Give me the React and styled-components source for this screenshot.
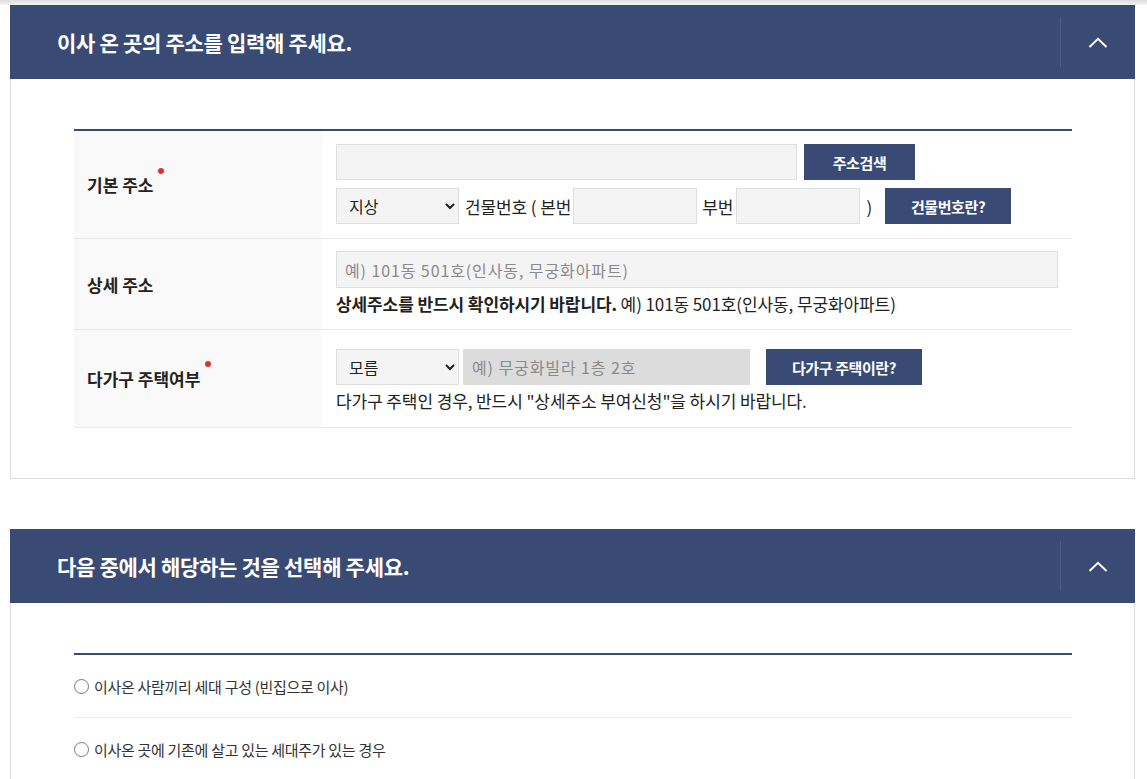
import styled, { createGlobalStyle } from "styled-components";

const NAVY = "#394b75";

const GlobalStyle = createGlobalStyle`
  html, body {
    margin: 0;
    padding: 0;
    background: #fff;
  }
  body {
    font-family: "Noto Sans CJK KR", "Noto Sans", sans-serif;
    color: #222;
  }
  * {
    box-sizing: border-box;
  }
`;

const Page = styled.div`
  width: 1147px;
  padding: 5px 12px 0 10px;
  position: relative;
`;

const TopShade = styled.div`
  position: absolute;
  top: 0;
  left: 0;
  right: 0;
  height: 5px;
  background: linear-gradient(#dcdcdc, #f4f4f4);
`;

const Section = styled.section`
  margin-bottom: 50px;
`;

const Header = styled.div`
  height: 74px;
  background: ${NAVY};
  display: flex;
  align-items: center;
`;

const Title = styled.h2`
  flex: 1;
  margin: 0;
  padding-left: 47px;
  color: #fff;
  font-size: 21px;
  font-weight: 700;
  letter-spacing: -0.3px;
`;

const Toggle = styled.div`
  width: 75px;
  height: 50px;
  border-left: 1px solid #4c5e88;
  display: flex;
  align-items: center;
  justify-content: center;
`;

const Body = styled.div`
  border: 1px solid #dcdcdc;
  border-top: 0;
  padding: 50px 62px 50px 63px;
`;

const Table = styled.div`
  border-top: 2px solid ${NAVY};
`;

const Row = styled.div`
  display: flex;
  border-bottom: 1px solid #e9e9e9;
`;

const LabelCell = styled.div`
  width: 248px;
  background: #f9f9f9;
  padding-left: 13px;
  display: flex;
  align-items: center;
`;

const Label = styled.span`
  position: relative;
  font-size: 17px;
  font-weight: 700;
  letter-spacing: 0;
  color: #222;
`;

const Required = styled.i`
  position: absolute;
  right: -11px;
  top: ${(p) => (p.$top ? p.$top : 0)}px;
  width: 6px;
  height: 6px;
  border-radius: 50%;
  background: #e4322b;
`;

const ContentCell = styled.div`
  flex: 1;
  padding: ${(p) => p.$pad} 14px;
  display: flex;
  flex-direction: column;
  gap: ${(p) => p.$gap || 3}px;
`;

const Line = styled.div`
  display: flex;
  align-items: center;
  height: ${(p) => p.$h || 36}px;
  font-size: 17px;
  letter-spacing: -0.1px;
  color: #222;
  white-space: pre;
`;

const Input = styled.input`
  width: ${(p) => p.$w}px;
  height: ${(p) => p.$h || 36}px;
  margin-right: ${(p) => p.$mr || 0}px;
  border: 1px solid ${(p) => (p.$disabled ? "#dcdcdc" : "#dedede")};
  background: ${(p) => (p.$disabled ? "#dcdcdc" : "#f4f4f4")};
  padding: 0 8px;
  font-family: "Noto Sans CJK KR", sans-serif;
  font-size: 16px;
  letter-spacing: 0.9px;
  color: #333;
  outline: none;
  &::placeholder {
    color: #8a8a8a;
  }
`;

const Select = styled.select`
  width: 123px;
  height: 36px;
  margin-right: ${(p) => p.$mr || 0}px;
  border: 1px solid #dedede;
  background: #f4f4f4;
  padding: 0 8px;
  font-family: "Noto Sans CJK KR", sans-serif;
  font-size: 16px;
  color: #222;
`;

const Button = styled.button`
  width: ${(p) => p.$w}px;
  height: 36px;
  margin-left: ${(p) => p.$ml || 0}px;
  border: 0;
  background: ${NAVY};
  color: #fff;
  font-family: "Noto Sans CJK KR", sans-serif;
  font-size: 15px;
  font-weight: 700;
  letter-spacing: -0.4px;
  cursor: pointer;
`;

const Text = styled.span`
  margin-right: ${(p) => p.$mr || 0}px;
  margin-left: ${(p) => p.$ml || 0}px;
`;

const Strong = styled.b`
  font-weight: 700;
`;

const Option = styled.label`
  display: flex;
  align-items: center;
  height: 63px;
  border-bottom: 1px solid #e9e9e9;
  font-size: 15px;
  letter-spacing: -0.3px;
  color: #333;
`;

const Circle = styled.span`
  width: 15px;
  height: 15px;
  border: 1px solid #777;
  border-radius: 50%;
  margin-right: 5px;
`;

function Chevron() {
  return (
    <svg width="20" height="11" viewBox="0 0 20 11">
      <polyline
        points="1.5,10 10,1.8 18.5,10"
        fill="none"
        stroke="#fff"
        strokeWidth="2"
      />
    </svg>
  );
}

function SectionHeader({ title }) {
  return (
    <Header>
      <Title>{title}</Title>
      <Toggle>
        <Chevron />
      </Toggle>
    </Header>
  );
}

export default function App() {
  return (
    <Page>
      <GlobalStyle />
      <TopShade />
      <Section>
        <SectionHeader title="이사 온 곳의 주소를 입력해 주세요." />
        <Body>
          <Table>
            <Row>
              <LabelCell>
                <Label>
                  기본 주소
                  <Required $top={-4} />
                </Label>
              </LabelCell>
              <ContentCell $pad="13px 14px 14px" $gap={8}>
                <Line>
                  <Input $w={461} />
                  <Button $w={111} $ml={7}>
                    주소검색
                  </Button>
                </Line>
                <Line>
                  <Select $mr={6}>
                    <option>지상</option>
                    <option>지하</option>
                  </Select>
                  <Text $mr={2}>건물번호 ( 본번</Text>
                  <Input $w={124} $mr={5} />
                  <Text $mr={3}>부번</Text>
                  <Input $w={124} />
                  <Text $ml={6}>)</Text>
                  <Button $w={126} $ml={13}>
                    건물번호란?
                  </Button>
                </Line>
              </ContentCell>
            </Row>
            <Row>
              <LabelCell>
                <Label>상세 주소</Label>
              </LabelCell>
              <ContentCell $pad="12px 14px 14px">
                <Line $h={37}>
                  <Input
                    $w={722}
                    $h={37}
                    placeholder="예) 101동 501호(인사동, 무궁화아파트)"
                  />
                </Line>
                <Line $h={24}>
                  <Strong>상세주소를 반드시 확인하시기 바랍니다.</Strong>
                  {" 예) 101동 501호(인사동, 무궁화아파트)"}
                </Line>
              </ContentCell>
            </Row>
            <Row>
              <LabelCell>
                <Label>
                  다가구 주택여부
                  <Required $top={-5} />
                </Label>
              </LabelCell>
              <ContentCell $pad="19px 14px 15px">
                <Line>
                  <Select $mr={4}>
                    <option>모름</option>
                    <option>예</option>
                    <option>아니오</option>
                  </Select>
                  <Input $w={287} $disabled placeholder="예) 무궁화빌라 1층 2호" />
                  <Button $w={156} $ml={16}>
                    다가구 주택이란?
                  </Button>
                </Line>
                <Line $h={24}>
                  다가구 주택인 경우, 반드시 "상세주소 부여신청"을 하시기 바랍니다.
                </Line>
              </ContentCell>
            </Row>
          </Table>
        </Body>
      </Section>
      <Section>
        <SectionHeader title="다음 중에서 해당하는 것을 선택해 주세요." />
        <Body>
          <Table>
            <Option>
              <Circle />
              이사온 사람끼리 세대 구성 (빈집으로 이사)
            </Option>
            <Option>
              <Circle />
              이사온 곳에 기존에 살고 있는 세대주가 있는 경우
            </Option>
          </Table>
        </Body>
      </Section>
    </Page>
  );
}
